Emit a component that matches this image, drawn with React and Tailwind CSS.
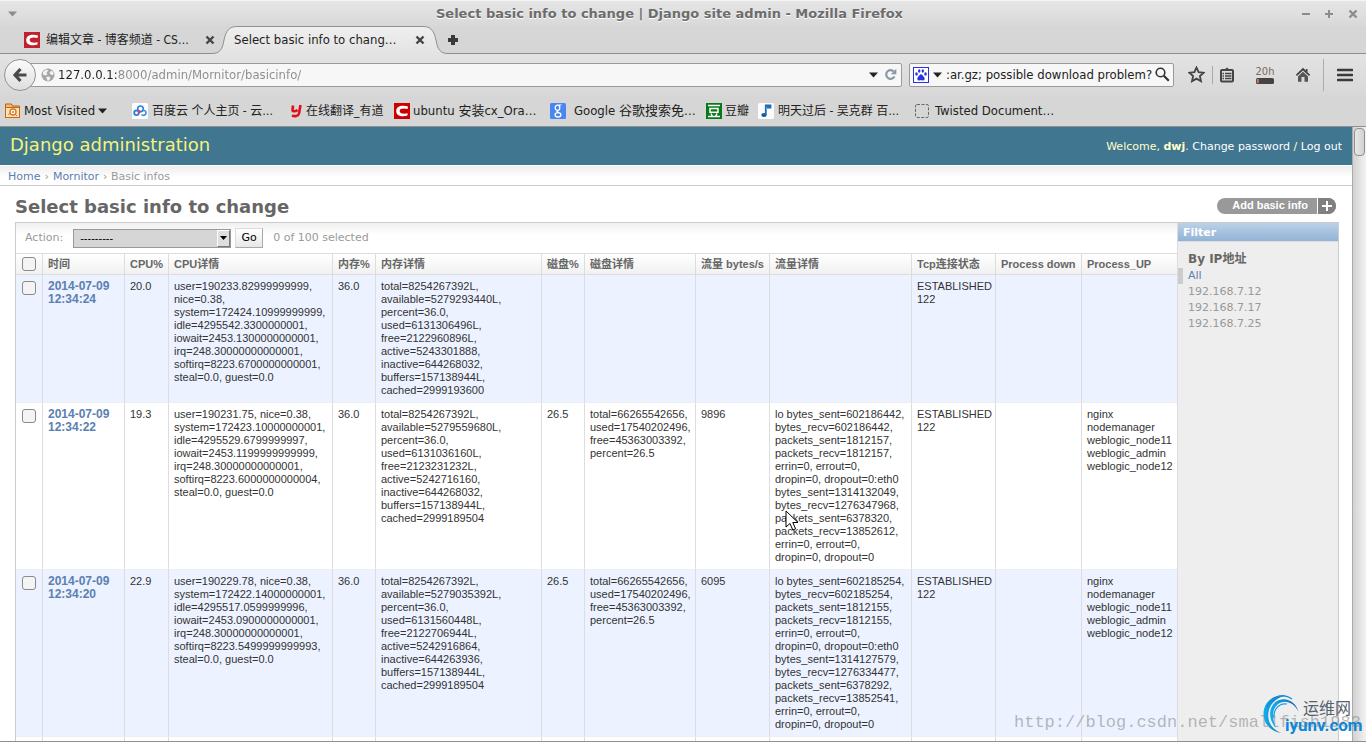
import React from "react";

const uiFont =
  "font-['DejaVu_Sans_Condensed','DejaVu_Sans','Noto_Sans_CJK_SC',sans-serif] text-[13px]";

const columns = [
  { label: "时间", width: "w-[82px]" },
  { label: "CPU%", width: "w-[44px]" },
  { label: "CPU详情", width: "w-[164px]" },
  { label: "内存%", width: "w-[43px]" },
  { label: "内存详情", width: "w-[166px]" },
  { label: "磁盘%", width: "w-[43px]" },
  { label: "磁盘详情", width: "w-[111px]" },
  { label: "流量 bytes/s", width: "w-[74px]" },
  { label: "流量详情", width: "w-[142px]" },
  { label: "Tcp连接状态", width: "w-[84px]" },
  { label: "Process down", width: "w-[86px]" },
  { label: "Process_UP", width: "w-[96px]" },
];

const processes = "nginx nodemanager weblogic_node11 weblogic_admin weblogic_node12";

const rows = [
  {
    time: "2014-07-09 12:34:24",
    cells: [
      "20.0",
      "user=190233.82999999999, nice=0.38, system=172424.10999999999, idle=4295542.3300000001, iowait=2453.1300000000001, irq=248.30000000000001, softirq=8223.6700000000001, steal=0.0, guest=0.0",
      "36.0",
      "total=8254267392L, available=5279293440L, percent=36.0, used=6131306496L, free=2122960896L, active=5243301888, inactive=644268032, buffers=157138944L, cached=2999193600",
      "",
      "",
      "",
      "",
      "ESTABLISHED 122",
      "",
      "",
    ],
  },
  {
    time: "2014-07-09 12:34:22",
    cells: [
      "19.3",
      "user=190231.75, nice=0.38, system=172423.10000000001, idle=4295529.6799999997, iowait=2453.1199999999999, irq=248.30000000000001, softirq=8223.6000000000004, steal=0.0, guest=0.0",
      "36.0",
      "total=8254267392L, available=5279559680L, percent=36.0, used=6131036160L, free=2123231232L, active=5242716160, inactive=644268032, buffers=157138944L, cached=2999189504",
      "26.5",
      "total=66265542656, used=17540202496, free=45363003392, percent=26.5",
      "9896",
      "lo bytes_sent=602186442, bytes_recv=602186442, packets_sent=1812157, packets_recv=1812157, errin=0, errout=0, dropin=0, dropout=0:eth0 bytes_sent=1314132049, bytes_recv=1276347968, packets_sent=6378320, packets_recv=13852612, errin=0, errout=0, dropin=0, dropout=0",
      "ESTABLISHED 122",
      "",
      processes,
    ],
  },
  {
    time: "2014-07-09 12:34:20",
    cells: [
      "22.9",
      "user=190229.78, nice=0.38, system=172422.14000000001, idle=4295517.0599999996, iowait=2453.0900000000001, irq=248.30000000000001, softirq=8223.5499999999993, steal=0.0, guest=0.0",
      "36.0",
      "total=8254267392L, available=5279035392L, percent=36.0, used=6131560448L, free=2122706944L, active=5242916864, inactive=644263936, buffers=157138944L, cached=2999189504",
      "26.5",
      "total=66265542656, used=17540202496, free=45363003392, percent=26.5",
      "6095",
      "lo bytes_sent=602185254, bytes_recv=602185254, packets_sent=1812155, packets_recv=1812155, errin=0, errout=0, dropin=0, dropout=0:eth0 bytes_sent=1314127579, bytes_recv=1276334477, packets_sent=6378292, packets_recv=13852541, errin=0, errout=0, dropin=0, dropout=0",
      "ESTABLISHED 122",
      "",
      processes,
    ],
  },
];

function CsdnIcon({ fill }) {
  return (
    <svg width="16" height="16" viewBox="0 0 16 16" className="shrink-0">
      <rect width="16" height="16" fill={fill} />
      <path
        d="M14 3.600C11 2.600 6.500 2.400 4.200 4C1.600 5.800 1.600 10.200 4 12C6.200 13.600 10.500 13.500 13.400 12.600L13.700 10.200C11.500 10.800 8 11 6.500 9.800C5.200 8.600 5.400 6.800 6.800 6C8.400 5.100 11.500 5.300 13.600 6Z"
        fill="#fff"
      />
    </svg>
  );
}

function CloseIcon({ size = 10, color = "#444" }) {
  return (
    <svg width={size} height={size} viewBox="0 0 10 10">
      <path d="M1.500 1.500L8.500 8.500M8.500 1.500L1.500 8.500" stroke={color} strokeWidth="2.400" />
    </svg>
  );
}

function DownArrow() {
  return (
    <svg width="9" height="6" viewBox="0 0 9 6" className="shrink-0">
      <path d="M0 0.500H9L4.500 5.500Z" fill="#222" />
    </svg>
  );
}

function TitleBar() {
  return (
    <div className="flex h-[26px] items-center justify-between border-t border-[#f4f4f4] bg-gradient-to-b from-[#e6e6e6] to-[#d8d8d8] px-2">
      <svg width="9" height="6" viewBox="0 0 9 6">
        <path d="M0 0.500H9L4.500 5.500Z" fill="#8c8c8c" />
      </svg>
      <div className="flex-1 pl-5 text-center font-['DejaVu_Sans',sans-serif] text-[13px] font-bold text-[#6c6c6c] [text-shadow:0_1px_0_#fff]">
        Select basic info to change | Django site admin - Mozilla Firefox
      </div>
      <div className="flex items-center gap-[15px]">
        <button aria-label="Minimize" className="block">
          <svg width="8" height="8" viewBox="0 0 8 8">
            <path d="M0 4H8" stroke="#8c8c8c" strokeWidth="2" />
          </svg>
        </button>
        <button aria-label="Maximize" className="block">
          <svg width="8" height="8" viewBox="0 0 8 8">
            <path d="M0 4H8M4 0V8" stroke="#8c8c8c" strokeWidth="2" />
          </svg>
        </button>
        <button aria-label="Close" className="block">
          <CloseIcon size={10} color="#8c8c8c" />
        </button>
      </div>
    </div>
  );
}

function TabStrip() {
  return (
    <div className={`${uiFont} flex h-[28px] items-stretch border-b border-[#8f8f8f] bg-[#d6d6d6] pl-6 text-[#222]`}>
      <div className="flex w-[188px] items-center justify-between pr-[-2px]">
        <div className="flex items-center gap-1.5 text-[12px] whitespace-nowrap">
          <CsdnIcon fill="#c1202d" />
          编辑文章 - 博客频道 - CS…
        </div>
        <button aria-label="Close tab" className="-mr-[3px] block">
          <CloseIcon />
        </button>
      </div>
      <div className="relative -mb-px flex w-[236px] items-center pr-[23px] pl-[22px]">
        <svg width="236" height="30" viewBox="0 0 236 30" className="absolute -top-px left-0">
          <defs>
            <linearGradient id="tab" x1="0" y1="0" x2="0" y2="1">
              <stop offset="0" stopColor="#efefef" />
              <stop offset="1" stopColor="#e3e3e3" />
            </linearGradient>
          </defs>
          <path
            d="M0 30V28.500C8 28.500 10.500 24 12 15C14 5 18 1.500 25 1.500H211C218 1.500 222 5 224 15C225.500 24 228 28.500 236 28.500V30Z"
            fill="url(#tab)"
          />
          <path
            d="M0 28.500C8 28.500 10.500 24 12 15C14 5 18 1.500 25 1.500H211C218 1.500 222 5 224 15C225.500 24 228 28.500 236 28.500"
            fill="none"
            stroke="#8f8f8f"
          />
        </svg>
        <span className="relative flex-1 truncate">Select basic info to chang…</span>
        <button aria-label="Close tab" className="relative block">
          <CloseIcon />
        </button>
      </div>
      <button aria-label="New tab" className="flex items-center">
        <svg width="10" height="10" viewBox="0 0 10 10">
          <path d="M3 0H7V3H10V7H7V10H3V7H0V3H3Z" fill="#3a3a3a" />
        </svg>
      </button>
    </div>
  );
}

function Toolbar() {
  return (
    <div className={`${uiFont} flex h-[41px] items-center bg-gradient-to-b from-[#e3e3e3] to-[#d8d8d8] pr-[13px] pl-1 text-[#222]`}>
      <button
        aria-label="Back"
        className="relative z-10 flex h-8 w-8 shrink-0 items-center justify-center rounded-full border border-[#8d949c] bg-gradient-to-b from-[#fbfbfb] to-[#dedede]"
      >
        <svg width="16" height="16" viewBox="0 0 16 16">
          <path d="M8.500 2L3 8L8.500 14M3.500 8H14.500" fill="none" stroke="#4a4a4a" strokeWidth="3.200" />
        </svg>
      </button>
      <div className="-ml-2 flex h-6 flex-1 items-center rounded-r-[2px] border border-[#9a9a9a] bg-[#f7f7f7] pr-1 pl-3">
        <svg width="14" height="14" viewBox="0 0 14 14" className="shrink-0">
          <circle cx="7" cy="7" r="6.500" fill="#a6a6a6" />
          <path
            d="M2 4L5 1.500L7.500 2.500L5.500 4.500L6.500 6.500L4 7.500L2 6.500ZM8.500 4L11 2.800L12.800 5.800L11.500 7L9.500 6.500ZM5 9L8 8.500L9.500 10L8 12.500L6.500 13L6 11Z"
            fill="#f3f3f3"
          />
        </svg>
        <input
          aria-label="Address"
          defaultValue="127.0.0.1:8000/admin/Mornitor/basicinfo/"
          className="mx-[3px] h-5 min-w-0 flex-1 bg-gradient-to-r from-[#222] from-[60px] to-[#8b8b8b] to-[60px] bg-clip-text text-transparent outline-none"
        />
        <DownArrow />
        <button aria-label="Reload" className="ml-1.5 block">
          <svg width="13" height="13" viewBox="0 0 13 13">
            <path d="M10.500 8.500A4.400 4.400 0 1 1 9.800 3.400" fill="none" stroke="#8b98a6" strokeWidth="2.200" />
            <path d="M12.300 0.800V6.300H6.800Z" fill="#8b98a6" />
          </svg>
        </button>
      </div>
      <div className="ml-[7px] flex h-6 w-[265px] items-center rounded-[2px] border border-[#9a9a9a] bg-[#f7f7f7] px-[3px]">
        <svg width="16" height="16" viewBox="0 0 16 16" className="shrink-0">
          <rect x="0.500" y="0.500" width="15" height="15" fill="#fff" stroke="#2932e1" />
          <g fill="#2932e1">
            <ellipse cx="3.500" cy="7" rx="1.300" ry="1.700" />
            <ellipse cx="6.200" cy="4" rx="1.200" ry="1.700" />
            <ellipse cx="9.800" cy="4" rx="1.200" ry="1.700" />
            <ellipse cx="12.500" cy="7" rx="1.300" ry="1.700" />
            <path d="M8 7.300C9.400 7.300 9.800 8.800 11 10C12.300 11.400 11.700 13.700 9.800 13.500C8.600 13.300 7.400 13.300 6.200 13.500C4.300 13.700 3.700 11.400 5 10C6.200 8.800 6.600 7.300 8 7.300Z" />
          </g>
        </svg>
        <div className="ml-1">
          <DownArrow />
        </div>
        <input
          aria-label="Search"
          defaultValue=":ar.gz; possible download problem?"
          className="ml-1 h-5 min-w-0 flex-1 bg-transparent outline-none"
        />
        <button aria-label="Search" className="block">
          <svg width="15" height="15" viewBox="0 0 15 15">
            <circle cx="5.500" cy="5.500" r="4.300" fill="none" stroke="#333" strokeWidth="1.600" />
            <path d="M8.800 8.800L13.800 13.800" stroke="#333" strokeWidth="2.200" />
          </svg>
        </button>
      </div>
      <div className="ml-3.5 flex items-center">
        <button aria-label="Bookmark this page" className="block">
          <svg width="17" height="17" viewBox="0 0 17 17">
            <path
              d="M8.500 1.500L10.600 6.200L15.700 6.700L11.900 10.100L13 15.200L8.500 12.600L4 15.200L5.100 10.100L1.300 6.700L6.400 6.200Z"
              fill="none"
              stroke="#444"
              strokeWidth="1.800"
            />
          </svg>
        </button>
        <div className="ml-[7px] h-[18px] w-px bg-[#a9a9a9]" />
        <button aria-label="Bookmarks" className="ml-[7px] block">
          <svg width="14" height="16" viewBox="0 0 14 16">
            <path d="M4 3L7 0.500L10 3Z" fill="#444" />
            <rect x="1" y="3" width="12" height="11.500" rx="1" fill="none" stroke="#444" strokeWidth="2" />
            <path d="M2.500 6.500H4M5 6.500H11.500M2.500 9H4M5 9H11.500M2.500 11.500H4M5 11.500H11.500" stroke="#444" strokeWidth="1.300" />
          </svg>
        </button>
        <div className="ml-[21px] flex w-[20px] flex-col items-center font-['DejaVu_Sans_Condensed',sans-serif] text-[11px] leading-3 text-[#7a6a5c]">
          20h
          <svg width="18" height="6" viewBox="0 0 18 6">
            <rect width="18" height="6" rx="1.500" fill="#444" />
            <rect x="0.800" y="1" width="2" height="4" fill="#d9705c" />
          </svg>
        </div>
        <button aria-label="Home" className="ml-5 block">
          <svg width="16" height="16" viewBox="0 0 16 16">
            <path d="M8 0.800L0.800 7.800L2 9L8 3.400L14 9L15.200 7.800L12.500 5.200V2H10.800V3.500Z" fill="#444" />
            <path d="M8 4.800L3 9.400V14.800H6.500V10H9.500V14.800H13V9.400Z" fill="#555" />
          </svg>
        </button>
        <div className="ml-3 h-8 w-px bg-[#a9adb2]" />
        <button aria-label="Menu" className="ml-[13px] block">
          <svg width="16" height="14" viewBox="0 0 16 14">
            <path d="M1 2H15M1 7H15M1 12H15" stroke="#3a3a3a" strokeWidth="2.600" strokeLinecap="round" />
          </svg>
        </button>
      </div>
    </div>
  );
}

function FolderIcon() {
  return (
    <svg width="16" height="16" viewBox="0 0 16 16" className="shrink-0">
      <path d="M0.500 4.500V1H6.500L7.500 3H14.500V4.500" fill="#f4b877" stroke="#b9600f" />
      <rect x="0.500" y="4.500" width="14" height="10" fill="#ffe1b8" stroke="#c9660f" />
      <circle cx="8" cy="9" r="3" fill="#fff" stroke="#d47a28" strokeWidth="1.400" />
      <circle cx="8" cy="9" r="1" fill="#d47a28" />
      <path d="M10 11L12 13M3 12L5 10" stroke="#d47a28" />
    </svg>
  );
}

function CloudIcon() {
  return (
    <svg width="16" height="16" viewBox="0 0 16 16" className="shrink-0">
      <rect width="16" height="16" rx="1.500" fill="#fdfdfd" />
      <circle cx="8.500" cy="5.800" r="2.800" fill="none" stroke="#2d7fe0" strokeWidth="1.600" />
      <circle cx="4.500" cy="9.800" r="2.300" fill="none" stroke="#2d7fe0" strokeWidth="1.800" />
      <path d="M9.500 11.500C11 13 14 12.300 14 9.800C14 8 12.500 7.300 11 7.500" fill="none" stroke="#3f92ee" strokeWidth="1.700" />
      <circle cx="7.200" cy="8.800" r="1.500" fill="#e8403c" />
    </svg>
  );
}

function YoudaoIcon() {
  return (
    <svg width="11" height="14" viewBox="0 0 11 14" className="shrink-0">
      <path
        d="M2 1.500L1.500 6C1.400 7.700 4.500 7.700 6.500 6M9.500 1L8 9.500C7.400 12.300 3.500 12.600 1 11.500"
        fill="none"
        stroke="#e00f1c"
        strokeWidth="2.600"
      />
    </svg>
  );
}

function GoogleIcon() {
  return (
    <svg width="16" height="16" viewBox="0 0 16 16" className="shrink-0">
      <rect width="16" height="16" rx="1.500" fill="#4a86f0" />
      <ellipse cx="7.500" cy="4.800" rx="2.300" ry="2.600" fill="none" stroke="#fff" strokeWidth="1.300" />
      <ellipse cx="8" cy="11.800" rx="2.900" ry="2.200" fill="none" stroke="#fff" strokeWidth="1.300" />
      <path d="M8.500 2H11.500M7.500 7.500C6 8.300 7.500 9 9 9.600" fill="none" stroke="#fff" strokeWidth="1.200" />
    </svg>
  );
}

function DoubanIcon() {
  return (
    <svg width="16" height="16" viewBox="0 0 16 16" className="shrink-0">
      <rect width="16" height="16" fill="#077a17" />
      <path d="M2 2.500H14M2 13.500H14" stroke="#fff" strokeWidth="1.600" />
      <rect x="4" y="5.500" width="8" height="3.800" fill="none" stroke="#fff" strokeWidth="1.500" />
      <path d="M5 10.500L6.200 13M11 10.500L9.800 13" stroke="#fff" strokeWidth="1.500" />
    </svg>
  );
}

function MusicIcon() {
  return (
    <svg width="16" height="16" viewBox="0 0 16 16" className="shrink-0">
      <rect width="16" height="16" rx="1.500" fill="#fbfbfb" />
      <ellipse cx="6" cy="12" rx="2.700" ry="2" fill="#13589c" />
      <path d="M7.800 12V2.500H12.500V4.500H9" fill="none" stroke="#1b6fb8" strokeWidth="1.800" />
    </svg>
  );
}

function BlankIcon() {
  return (
    <svg width="16" height="16" viewBox="0 0 16 16" className="shrink-0">
      <rect x="0.500" y="1.500" width="13" height="13" rx="1.500" fill="none" stroke="#666" strokeDasharray="3 1.500" />
    </svg>
  );
}

const bookmarks = [
  { icon: <FolderIcon />, label: "Most Visited", style: "w-[127px] gap-[3px]", arrow: true },
  { icon: <CloudIcon />, label: "百度云 个人主页 - 云…", style: "w-[159px] gap-1 text-[12px]" },
  { icon: <YoudaoIcon />, label: "在线翻译_有道", style: "w-[103px] gap-1 text-[12px]" },
  { icon: <CsdnIcon fill="#cc0000" />, label: "ubuntu 安装cx_Ora…", style: "w-[156px] gap-[3px]" },
  { icon: <GoogleIcon />, label: "Google 谷歌搜索免…", style: "w-[156px] gap-2" },
  { icon: <DoubanIcon />, label: "豆瓣", style: "w-[52px] gap-[3px] text-[12px]" },
  { icon: <MusicIcon />, label: "明天过后 - 吴克群 百…", style: "w-[157px] gap-1 text-[12px]" },
  { icon: <BlankIcon />, label: "Twisted Document…", style: "w-[150px] gap-1" },
];

function BookmarksBar() {
  return (
    <div className={`${uiFont} flex h-8 items-center border-b border-[#8f8f8f] bg-[#d6d6d6] pl-[5px] text-[#222]`}>
      {bookmarks.map((b) => (
        <a key={b.label} href="#" className={`${b.style} flex shrink-0 items-center whitespace-nowrap`}>
          {b.icon}
          {b.label}
          {b.arrow && <DownArrow />}
        </a>
      ))}
    </div>
  );
}

function Checkbox({ label }) {
  return (
    <input
      type="checkbox"
      aria-label={label}
      className="mx-auto block h-3.5 w-3.5 appearance-none rounded-[3px] border border-[#8a8a8a] bg-[#f4f4f4] checked:bg-[#5b80b2]"
    />
  );
}

function ResultTable() {
  return (
    <table className="w-full table-fixed border-separate border-spacing-0 font-['Liberation_Sans','Noto_Sans_CJK_SC',sans-serif] text-[11px] leading-[13px] text-[#333]">
      <thead>
        <tr className="h-[22px]">
          <th className="w-[26px] border-y border-[#ddd] bg-gradient-to-b from-white to-[#f1f1f1] p-0">
            <Checkbox label="Select all" />
          </th>
          {columns.map((c) => (
            <th
              key={c.label}
              className={`${c.width} border-y border-l border-[#ddd] bg-gradient-to-b from-white to-[#f1f1f1] px-[5px] py-0 text-left font-bold whitespace-nowrap text-[#666]`}
            >
              {c.label}
            </th>
          ))}
        </tr>
      </thead>
      <tbody className="align-top">
        {rows.map((row) => (
          <tr key={row.time} className="odd:bg-[#ecf2ff]">
            <td className="border-b border-[#eee] pt-1.5">
              <Checkbox label={`Select ${row.time}`} />
            </td>
            <th className="border-b border-l border-b-[#eee] border-l-[#ddd] p-[5px] text-left text-[12px] leading-[13px] font-bold">
              <a href="#" className="text-[#5b80b2]">
                {row.time}
              </a>
            </th>
            {row.cells.map((cell, i) => (
              <td key={i} className="border-b border-l border-b-[#eee] border-l-[#ddd] p-[5px]">
                {cell}
              </td>
            ))}
          </tr>
        ))}
        <tr className="h-10">
          <td />
          {columns.map((c) => (
            <td key={c.label} className="border-l border-[#ddd]" />
          ))}
        </tr>
      </tbody>
    </table>
  );
}

function ActionBar() {
  return (
    <div className="flex h-[30px] items-center bg-gradient-to-b from-[#f0f0f0] to-white to-40% pl-[9px] text-[#999]">
      <label htmlFor="action">Action:</label>
      <div className="relative ml-2.5">
        <select
          id="action"
          className="block h-[19px] w-[158px] appearance-none border border-[#999] bg-[#d6d6d6] pl-1.5 font-['Liberation_Sans',sans-serif] text-[11px] leading-[17px] text-black"
        >
          <option>---------</option>
        </select>
        <span className="pointer-events-none absolute top-px right-px flex h-[17px] w-[13px] items-center justify-center border border-t-white border-r-[#777] border-b-[#777] border-l-white bg-[#dedede]">
          <svg width="7" height="4" viewBox="0 0 7 4">
            <path d="M0 0H7L3.500 4Z" fill="#000" />
          </svg>
        </span>
      </div>
      <button className="ml-1 h-5 w-7 border border-t-[#ddd] border-r-[#aaa] border-b-[#aaa] border-l-[#ddd] bg-gradient-to-b from-white to-[#e8e8e8] text-black">
        Go
      </button>
      <span className="ml-2.5">0 of 100 selected</span>
    </div>
  );
}

function FilterPanel() {
  const addresses = ["192.168.7.12", "192.168.7.17", "192.168.7.25"];
  return (
    <aside className="w-[162px] shrink-0 border-x border-l-[#ddd] border-r-[#ccc] bg-[#eee]">
      <h2 className="h-[19px] border-b border-[#ddd] bg-gradient-to-b from-[#bcd1e9] to-[#93b3d4] pl-[5px] leading-5 font-bold text-white">
        Filter
      </h2>
      <h3 className="mt-2 pl-2.5 text-[12px] leading-[18px] font-bold text-[#666]">By IP地址</h3>
      <ul className="leading-4">
        <li className="border-l-[5px] border-[#ccc] pl-[5px]">
          <a href="#" className="text-[#5b80b2]">
            All
          </a>
        </li>
        {addresses.map((ip) => (
          <li key={ip} className="pl-2.5">
            <a href="#" className="text-[#999]">
              {ip}
            </a>
          </li>
        ))}
      </ul>
    </aside>
  );
}

function AdminPage() {
  return (
    <div className="flex min-w-0 flex-1 flex-col bg-white font-['DejaVu_Sans','Noto_Sans_CJK_SC',sans-serif] text-[11px]">
      <header className="flex h-[38px] shrink-0 items-center justify-between bg-[#417690] px-2.5 text-[#ffc]">
        <h1 className="pb-0.5 text-[18px] leading-5 text-[#f4f379]">Django administration</h1>
        <div className="pt-0.5">
          Welcome, <strong>dwj</strong>.{" "}
          <a href="#" className="text-white">
            Change password
          </a>{" "}
          /{" "}
          <a href="#" className="text-white">
            Log out
          </a>
        </div>
      </header>
      <nav className="flex h-[21px] shrink-0 items-center gap-1 border-t border-b border-t-white border-b-[#ccc] bg-gradient-to-b from-[#eee] to-white to-60% pt-0.5 pl-2 leading-4 text-[#999]">
        <a href="#" className="text-[#5b80b2]">
          Home
        </a>
        ›
        <a href="#" className="text-[#5b80b2]">
          Mornitor
        </a>
        › Basic infos
      </nav>
      <main className="flex min-h-0 flex-1 flex-col pr-[13px] pl-[15px]">
        <div className="flex h-9 shrink-0 items-center justify-between pt-1 pr-[3px]">
          <h2 className="text-[18px] font-bold text-[#666]">Select basic info to change</h2>
          <a
            href="#"
            className="flex h-4 overflow-hidden rounded-full bg-[#999] pl-[15px] font-['Liberation_Sans',sans-serif] leading-[15px] font-bold text-white"
          >
            Add basic info
            <span className="ml-[9px] flex w-[19px] items-center justify-center border-l border-white bg-[#808080] pr-px">
              <svg width="10" height="10" viewBox="0 0 10 10">
                <path d="M5 0V10M0 5H10" stroke="#fff" strokeWidth="2" />
              </svg>
            </span>
          </a>
        </div>
        <div className="flex min-h-0 flex-1 border-t border-l border-[#ccc]">
          <div className="min-w-0 flex-1">
            <ActionBar />
            <ResultTable />
          </div>
          <FilterPanel />
        </div>
      </main>
    </div>
  );
}

function Watermarks() {
  return (
    <div className="pointer-events-none absolute right-0 bottom-0 h-12 w-[352px]">
      <span className="absolute top-[18px] left-0 font-['Liberation_Mono',monospace] text-[17px] leading-6 text-[#8c8c8c]/60">
        http://blog.csdn.net/smallfish1983
      </span>
      <svg width="40" height="42" viewBox="0 0 40 42" className="absolute top-0 left-[248px]">
        <defs>
          <linearGradient id="ring" x1="0" y1="0" x2="1" y2="0">
            <stop offset="0" stopColor="#12b0f0" />
            <stop offset="1" stopColor="#0a5fae" />
          </linearGradient>
        </defs>
        <path
          d="M24 2.500C13 0.500 2 8 1.500 20C1.200 31 9 38.500 19 40C11 36.500 6 30.500 6.200 22C6.500 11.500 14 4.500 24 2.500Z"
          fill="url(#ring)"
        />
        <path d="M5 14C9 3 22 0 30 6" fill="none" stroke="#1a8fd8" strokeWidth="1.200" />
        <path
          d="M36.500 19C34 8 22 2.500 13.500 9C5.500 15.500 7 28 14 34.500C9.800 26 9.500 17 15.500 11.500C22 6 32 9 36.500 19Z"
          fill="url(#ring)"
        />
        <path d="M12 25C11 17 17 9.500 25 11" fill="none" stroke="#1a9be2" strokeWidth="1.200" />
      </svg>
      <span className="absolute top-1 left-[289px] font-['Noto_Sans_CJK_SC',sans-serif] text-[16px] leading-5 text-[#55606c]">
        运维网
      </span>
      <span className="absolute top-[22px] left-[271px] font-['Roboto',sans-serif] text-[17px] leading-5 font-bold text-[#1186d4]">
        iyunv.com
      </span>
    </div>
  );
}

export default function App() {
  return (
    <div className="relative flex h-screen flex-col overflow-hidden border-b border-[#8f8f8f]">
      <TitleBar />
      <TabStrip />
      <Toolbar />
      <BookmarksBar />
      <div className="flex min-h-0 flex-1 overflow-hidden">
        <AdminPage />
        <div className="w-3.5 shrink-0 border-l border-[#aaa] bg-gradient-to-r from-[#d2d2d2] to-[#f2f2f2] px-px pt-px">
          <div className="h-7 rounded-[4px] border border-[#8f8f8f] bg-gradient-to-r from-[#e8e8e8] to-[#d2d2d2]" />
        </div>
      </div>
      <svg width="14" height="22" viewBox="0 0 14 22" className="pointer-events-none absolute top-[510px] left-[785px]">
        <path d="M1 1V17L5 13.500L7.800 20L10.600 18.800L7.800 12.500H13Z" fill="#fff" stroke="#000" />
      </svg>
      <Watermarks />
    </div>
  );
}
